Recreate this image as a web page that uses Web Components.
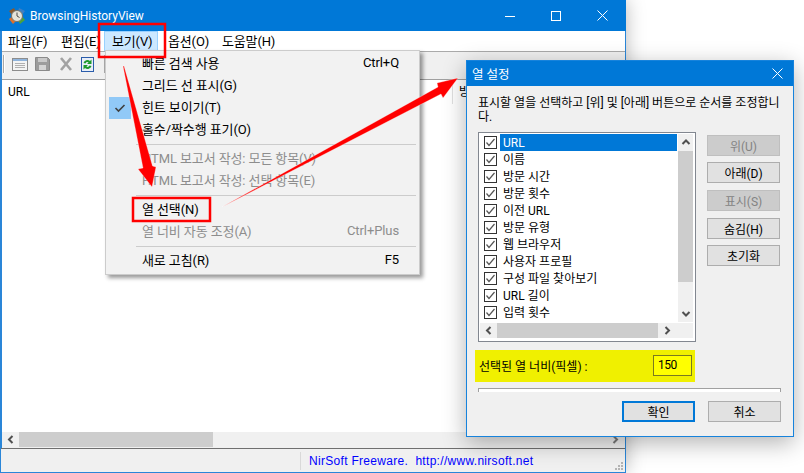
<!DOCTYPE html>
<html lang="ko">
<head>
<meta charset="utf-8">
<title>BrowsingHistoryView</title>
<style>
  html, body { margin: 0; height: 100%; background: #fff; overflow: hidden; }
  body { font: 13px Roboto, "Noto Sans CJK KR", sans-serif; color: #000; }
</style>
</head>
<body>

<app-window>
  <view-menu></view-menu>
</app-window>
<column-dialog></column-dialog>
<red-marks></red-marks>

<script>
const chevron = (dir, color = '#505050') => {
  const paths = {
    up: 'M1.5 6 L5 2.5 L8.5 6',
    down: 'M1.5 3 L5 6.5 L8.5 3',
    left: 'M6.5 1 L3 4.5 L6.5 8',
    right: 'M3.5 1 L7 4.5 L3.5 8',
  };
  return `<svg width="10" height="9" viewBox="0 0 10 9"><path d="${paths[dir]}" fill="none" stroke="${color}" stroke-width="2"/></svg>`;
};

class ToolIcons extends HTMLElement {
  constructor() {
    super();
    this.attachShadow({ mode: 'open' }).innerHTML = `
      <style>
        :host { display: flex; align-items: center; height: 100%; box-sizing: border-box; padding: 0 0 3px 1px; }
        .sep { width: 2px; height: 18px; background: linear-gradient(90deg, #a8a8a8 50%, #fff 50%); }
        svg { display: block; }
      </style>
      <div class="sep"></div>
      <svg style="margin-left:7px" width="16" height="13" viewBox="0 0 16 13">
        <rect x=".5" y=".5" width="15" height="12" fill="#f4f4f4" stroke="#8d8d8d"/>
        <rect x="1" y="1" width="14" height="2" fill="#8fb4dc"/>
        <path d="M3 5.500h10M3 7.500h10M3 9.500h10" stroke="#b0b0b0"/>
      </svg>
      <svg style="margin-left:7px" width="15" height="14" viewBox="0 0 15 14">
        <path d="M.5.5h12l2 2v11H.5z" fill="#9c9c9c" stroke="#8a8a8a"/>
        <rect x="3" y="1" width="9" height="4" fill="#c9c9c9"/>
        <rect x="4" y="8" width="7" height="5" fill="#d4d4d4"/>
      </svg>
      <svg style="margin-left:9px" width="14" height="14" viewBox="0 0 14 14">
        <path d="M2 1 L12 13 M12 1 L2 13" stroke="#a2a2a2" stroke-width="2.600"/>
      </svg>
      <svg style="margin-left:8px" width="13" height="15" viewBox="0 0 13 15">
        <rect x=".5" y=".5" width="12" height="14" fill="#e8eef8" stroke="#2a5caa"/>
        <path d="M2.500 6 A4 4 0 0 1 9 4 L10.500 2.500 V7 H6 L7.600 5.400 A2.400 2.400 0 0 0 4.500 6.500z" fill="#1d9a2c"/>
        <path d="M10.500 9 A4 4 0 0 1 4 11 L2.500 12.500 V8 H7 L5.400 9.600 A2.400 2.400 0 0 0 8.500 8.500z" fill="#1d9a2c"/>
      </svg>
      <div class="sep" style="margin-left:10px"></div>`;
  }
}
customElements.define('tool-icons', ToolIcons);

class AppWindow extends HTMLElement {
  constructor() {
    super();
    this.attachShadow({ mode: 'open' }).innerHTML = `
      <style>
        :host {
          position: absolute; left: 0; top: 0; width: 626px; height: 473px;
          box-sizing: border-box; display: flex; flex-direction: column;
          background: #f0f0f0;
          border: solid #2a86d8; border-width: 0 1px 1px 2px;
          box-shadow: 0 0 18px rgba(0,0,0,.28);
        }
        .title {
          height: 31px; margin-left: -2px; margin-right: -1px; flex: none; background: #0078d7; color: #fff;
          display: flex; align-items: center; font-size: 12px;
        }
        .title svg.logo { margin-left: 9px; }
        .title span { margin-left: 5px; }
        .caps { margin-left: auto; margin-right: 1px; display: flex; }
        .caps div { width: 46px; height: 30px; display: flex; align-items: center; justify-content: center; }
        .menubar {
          height: 20px; flex: none; background: #fff; display: flex; align-items: center;
          padding-left: 6px; line-height: 18px; letter-spacing: -.15px;
        }
        .menubar span { display: block; white-space: nowrap; padding-top: 1px; }
        .menubar .on {
          background: #cce8ff; box-shadow: inset 0 0 0 1px #99d1ff; height: 20px; line-height: 20px;
          padding: 1px 8px 0; margin: 0 10px 0 -1px; box-sizing: border-box; width: 54px;
        }
        .tools { height: 29px; flex: none; background: #f0f0f0; box-sizing: border-box; border-top: 1px solid #aaa; border-bottom: 1px solid #a0a0a0; }
        .list { flex: 1; background: #fff; min-height: 0; font-size: 12px; }
        .head { display: flex; height: 24px; }
        .head div { line-height: 24px; padding-left: 6px; white-space: nowrap; }
        .head .c1 { width: 444px; border-right: 1px solid #e0e0e0; flex: none; height: 21px; margin-top: 3px; line-height: 18px; }
        .head .c2 { margin-top: 3px; line-height: 18px; }
        .hbar { height: 15px; flex: none; display: flex; align-items: center; background: #f0f0f0; padding-bottom: 1px; }
        .hbar .arrow { width: 17px; display: flex; justify-content: center; }
        .hbar .thumb { width: 194px; height: 15px; background: #cdcdcd; }
        .hbar .end { margin-left: auto; margin-right: 2px; }
        .status {
          height: 24px; flex: none; box-sizing: border-box; border-top: 1px solid #6f6f6f; margin-left: -1px;
          display: flex; align-items: center; position: relative; background: #f0f0f0;
        }
        .status .cell { width: 299px; height: 18px; border-right: 1px solid #d9d9d9; flex: none; }
        .status a { color: #0000ff; margin-left: 8px; font: 12px "Liberation Sans", sans-serif; white-space: pre; letter-spacing: .3px; }
        .grip { position: absolute; right: 1px; bottom: 1px; }
      </style>
      <div class="title">
        <svg class="logo" width="16" height="16" viewBox="0 0 16 16">
          <path d="M0 3 L5 0 L7 4 L3 7z" fill="#8c5a2c"/>
          <path d="M10 0 L16 3 L13 7 L9 4z" fill="#3f7fc4"/>
          <path d="M0 11 L4 8 L7 13 L4 16z" fill="#e0702a"/>
          <path d="M9 12 L13 8 L16 12 L11 16z" fill="#4aa23c"/>
          <circle cx="8" cy="8" r="5.500" fill="#e6e4da" stroke="#75736a"/>
          <path d="M8 4.500 V8 L10.500 9.500" stroke="#4a4a4a" fill="none"/>
        </svg>
        <span>BrowsingHistoryView</span>
        <div class="caps">
          <div><svg width="10" height="10"><path d="M0 5.500h10" stroke="#fff"/></svg></div>
          <div><svg width="10" height="10"><rect x=".5" y=".5" width="9" height="9" fill="none" stroke="#fff"/></svg></div>
          <div><svg width="11" height="11"><path d="M.5.5l10 10M10.500.5l-10 10" stroke="#fff" fill="none"/></svg></div>
        </div>
      </div>
      <div class="menubar">
        <span style="width:53px">파일(F)</span>
        <span style="width:44px">편집(E)</span>
        <span class="on">보기(V)</span>
        <span style="width:54px">옵션(O)</span>
        <span>도움말(H)</span>
      </div>
      <div class="tools"><tool-icons></tool-icons></div>
      <div class="list">
        <div class="head"><div class="c1">URL</div><div class="c2">방</div></div>
      </div>
      <div class="hbar">
        <div class="arrow">${chevron('left')}</div>
        <div class="thumb"></div>
        <div class="arrow end">${chevron('right', '#7a7a7a')}</div>
      </div>
      <div class="status">
        <div class="cell"></div>
        <a>NirSoft Freeware.  http://www.nirsoft.net</a>
        <svg class="grip" width="10" height="10" viewBox="0 0 10 10" fill="#b4b4b4">
          <rect x="7" y="1" width="2" height="2"/><rect x="4" y="4" width="2" height="2"/><rect x="7" y="4" width="2" height="2"/>
          <rect x="1" y="7" width="2" height="2"/><rect x="4" y="7" width="2" height="2"/><rect x="7" y="7" width="2" height="2"/>
        </svg>
      </div>
      <slot></slot>`;
  }
}
customElements.define('app-window', AppWindow);

class MenuItem extends HTMLElement {
  constructor() {
    super();
    this.attachShadow({ mode: 'open' }).innerHTML = `
      <style>
        :host { display: flex; height: 22px; box-sizing: border-box; padding: 0 20px 2px 36px; align-items: center; white-space: nowrap; position: relative; letter-spacing: -.1px; }
        :host([disabled]) { color: #8d8d8d; }
        .key { margin-left: auto; }
        .mark { display: none; position: absolute; left: 3px; top: 1px; width: 22px; height: 22px; background: #91c9f7; align-items: center; justify-content: center; }
        :host([checked]) .mark { display: flex; }
      </style>
      <div class="mark"><svg width="12" height="10" viewBox="0 0 12 10"><path d="M1.500 5 L4.500 8 L10.500 2" fill="none" stroke="#404040" stroke-width="1.600"/></svg></div>
      <slot></slot>
      <span class="key"></span>`;
  }
  connectedCallback() {
    this.shadowRoot.querySelector('.key').textContent = this.getAttribute('key') || '';
  }
}
customElements.define('menu-item', MenuItem);

class ViewMenu extends HTMLElement {
  constructor() {
    super();
    this.attachShadow({ mode: 'open' }).innerHTML = `
      <style>
        :host {
          position: absolute; left: 103px; top: 50px; width: 315px; box-sizing: border-box;
          background: #f2f2f2; border: 1px solid #ccc; padding: 1px 0 3px;
          box-shadow: 3px 3px 4px rgba(0,0,0,.4); display: block;
        }
        .sep { height: 7px; margin: 0 3px 0 30px; position: relative; }
        .sep::after { content: ""; position: absolute; left: 0; right: 0; top: 4px; height: 1px; background: #ccc; }
      </style>
      <menu-item key="Ctrl+Q">빠른 검색 사용</menu-item>
      <menu-item>그리드 선 표시(G)</menu-item>
      <menu-item checked>힌트 보이기(T)</menu-item>
      <menu-item>홀수/짝수행 표기(O)</menu-item>
      <div class="sep"></div>
      <menu-item disabled>HTML 보고서 작성: 모든 항목(V)</menu-item>
      <menu-item disabled>HTML 보고서 작성: 선택 항목(E)</menu-item>
      <div class="sep"></div>
      <menu-item>열 선택(N)</menu-item>
      <menu-item disabled key="Ctrl+Plus">열 너비 자동 조정(A)</menu-item>
      <div class="sep"></div>
      <menu-item key="F5">새로 고침(R)</menu-item>`;
  }
}
customElements.define('view-menu', ViewMenu);

class CheckRow extends HTMLElement {
  constructor() {
    super();
    this.attachShadow({ mode: 'open' }).innerHTML = `
      <style>
        :host { display: flex; height: 17px; align-items: center; padding-left: 5px; font-size: 12px; }
        svg { flex: none; }
        .label { margin-left: 3px; padding-left: 3px; flex: 1; height: 17px; line-height: 19px; white-space: nowrap; }
        :host([selected]) .label { background: #0078d7; color: #fff; }
      </style>
      <svg width="13" height="13" viewBox="0 0 13 13">
        <rect x=".5" y=".5" width="12" height="12" fill="#fff" stroke="#333"/>
        <path d="M2.500 6.500 L5 9.500 L10.500 3" fill="none" stroke="#555" stroke-width="1.200"/>
      </svg>
      <div class="label"><slot></slot></div>`;
  }
}
customElements.define('check-row', CheckRow);

class DlgButton extends HTMLElement {
  constructor() {
    super();
    this.attachShadow({ mode: 'open' }).innerHTML = `
      <style>
        :host {
          display: flex; width: 73px; height: 21px; box-sizing: border-box; align-items: center; justify-content: center;
          background: #e1e1e1; border: 1px solid #adadad; white-space: nowrap; font-size: 12px;
        }
        :host([disabled]) { background: #ccc; border-color: #bfbfbf; color: #838383; }
        :host([default]) { border: 2px solid #0078d7; }
      </style>
      <slot></slot>`;
  }
}
customElements.define('dlg-button', DlgButton);

class ColumnDialog extends HTMLElement {
  constructor() {
    super();
    this.attachShadow({ mode: 'open' }).innerHTML = `
      <style>
        :host {
          position: absolute; left: 466px; top: 60px; width: 328px; height: 377px; box-sizing: border-box;
          background: #f0f0f0; border: 1px solid #1783dc; display: flex; flex-direction: column;
          box-shadow: 0 6px 22px rgba(0,0,0,.3);
        }
        .title { height: 25px; flex: none; background: #0078d7; color: #fff; display: flex; align-items: center; padding-left: 5px; font-size: 12.500px; }
        .title svg { margin-left: auto; margin-right: 10px; }
        .prompt { margin: 10px 0 0 11px; line-height: 14px; height: 27px; font-size: 12px; white-space: nowrap; }
        .main { display: flex; margin-top: 9px; padding-left: 11px; }
        .listbox {
          width: 218px; height: 210px; box-sizing: border-box; border: 1px solid #828790; background: #fff;
          position: relative; display: flex; flex-direction: column; flex: none;
        }
        .rows { position: absolute; left: 0; top: 1px; width: 198px; }
        .vbar {
          position: absolute; left: 199px; top: 1px; width: 15px; height: 188px; background: #f0f0f0;
          display: flex; flex-direction: column; align-items: center;
        }
        .vbar .cap { height: 17px; display: flex; align-items: center; flex: none; }
        .vbar .thumb { width: 15px; height: 131px; background: #cdcdcd; flex: none; }
        .vbar .end { margin-top: auto; }
        .hbar {
          position: absolute; left: 1px; top: 190px; width: 213px; height: 15px; background: #f0f0f0;
          display: flex; align-items: center;
        }
        .hbar .cap { width: 17px; display: flex; justify-content: center; flex: none; }
        .hbar .thumb { width: 161px; height: 15px; background: #cdcdcd; flex: none; }
        .side { margin-left: 11px; margin-top: 3px; }
        .side dlg-button + dlg-button { margin-top: 6px; }
        .side .w { margin-top: 7px !important; }
        .width {
          margin: 8px 0 0 8px; width: 220px; height: 32px; background: #f0f000; display: flex; align-items: center; padding: 0 0 1px 4px;
          box-sizing: border-box; font-size: 12px;
        }
        .width .val {
          margin-left: auto; margin-right: 3px; width: 39px; height: 21px; box-sizing: border-box; background: #ff0; border: 1px solid #7a7a20;
          padding-left: 4px; line-height: 19px; font-size: 12px; letter-spacing: -.5px;
        }
        .rule { margin: 6px 12px 0 11px; height: 3px; background: #fff; border: solid #a0a0a0; border-width: 1px 1px 0; }
        .foot { display: flex; justify-content: flex-end; gap: 13px; margin: 9px 12px 0 0; }
      </style>
      <div class="title">열 설정
        <svg width="11" height="11"><path d="M.5.5l10 10M10.500.5l-10 10" stroke="#fff" fill="none"/></svg>
      </div>
      <div class="prompt">표시할 열을 선택하고 [위] 및 [아래] 버튼으로 순서를 조정합니<br>다.</div>
      <div class="main">
        <div class="listbox">
          <div class="rows">
            <check-row selected>URL</check-row>
            <check-row>이름</check-row>
            <check-row>방문 시간</check-row>
            <check-row>방문 횟수</check-row>
            <check-row>이전 URL</check-row>
            <check-row>방문 유형</check-row>
            <check-row>웹 브라우저</check-row>
            <check-row>사용자 프로필</check-row>
            <check-row>구성 파일 찾아보기</check-row>
            <check-row>URL 길이</check-row>
            <check-row>입력 횟수</check-row>
          </div>
          <div class="vbar">
            <div class="cap">${chevron('up')}</div>
            <div class="thumb"></div>
            <div class="cap end">${chevron('down')}</div>
          </div>
          <div class="hbar">
            <div class="cap">${chevron('left')}</div>
            <div class="thumb"></div>
            <div class="cap">${chevron('right')}</div>
          </div>
        </div>
        <div class="side">
          <dlg-button disabled>위(U)</dlg-button>
          <dlg-button>아래(D)</dlg-button>
          <dlg-button disabled class="w">표시(S)</dlg-button>
          <dlg-button class="w">숨김(H)</dlg-button>
          <dlg-button>초기화</dlg-button>
        </div>
      </div>
      <div class="width"><span>선택된 열 너비(픽셀) :</span><div class="val">150</div></div>
      <div class="rule"></div>
      <div class="foot">
        <dlg-button default>확인</dlg-button>
        <dlg-button>취소</dlg-button>
      </div>`;
  }
}
customElements.define('column-dialog', ColumnDialog);

class RedMarks extends HTMLElement {
  constructor() {
    super();
    this.attachShadow({ mode: 'open' }).innerHTML = `
      <style>
        :host { position: absolute; left: 0; top: 0; width: 804px; height: 473px; pointer-events: none; }
        svg { display: block; }
      </style>
      <svg width="804" height="473" viewBox="0 0 804 473">
        <rect x="99" y="24" width="66" height="33" fill="none" stroke="#f00" stroke-width="2.500"/>
        <rect x="133" y="198" width="77" height="23" fill="none" stroke="#f00" stroke-width="2.500"/>
        <polygon points="123,66 124,66 152.500,166 156,167 152,187 138,169 143,168" fill="#f00" stroke="#fff" stroke-opacity=".5" stroke-width=".6"/>
        <polygon points="222,207 438,87 437,83 458,78 443,98 441,94" fill="#f00" stroke="#fff" stroke-opacity=".5" stroke-width=".6"/>
      </svg>`;
  }
}
customElements.define('red-marks', RedMarks);
</script>
</body>
</html>
